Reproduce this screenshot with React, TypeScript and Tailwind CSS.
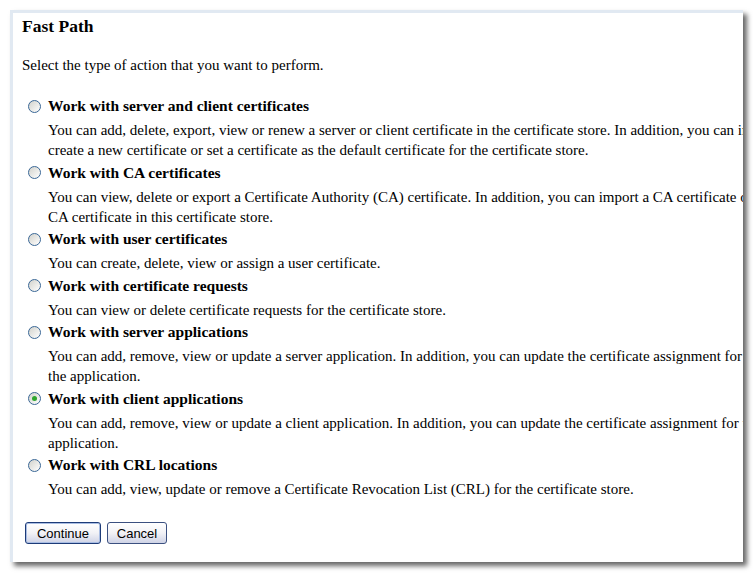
import React from "react";

interface Choice {
  title: string;
  lines: string[];
  checked?: boolean;
}

const choices: Choice[] = [
  {
    title: "Work with server and client certificates",
    lines: [
      "You can add, delete, export, view or renew a server or client certificate in the certificate store. In addition, you can import or",
      "create a new certificate or set a certificate as the default certificate for the certificate store.",
    ],
  },
  {
    title: "Work with CA certificates",
    lines: [
      "You can view, delete or export a Certificate Authority (CA) certificate. In addition, you can import a CA certificate or create a",
      "CA certificate in this certificate store.",
    ],
  },
  {
    title: "Work with user certificates",
    lines: ["You can create, delete, view or assign a user certificate."],
  },
  {
    title: "Work with certificate requests",
    lines: ["You can view or delete certificate requests for the certificate store."],
  },
  {
    title: "Work with server applications",
    lines: [
      "You can add, remove, view or update a server application. In addition, you can update the certificate assignment for",
      "the application.",
    ],
  },
  {
    title: "Work with client applications",
    lines: [
      "You can add, remove, view or update a client application. In addition, you can update the certificate assignment for the client",
      "application.",
    ],
    checked: true,
  },
  {
    title: "Work with CRL locations",
    lines: ["You can add, view, update or remove a Certificate Revocation List (CRL) for the certificate store."],
  },
];

const Radio: React.FC<{ checked?: boolean }> = ({ checked }) => (
  <span className="flex h-[13px] w-[13px] shrink-0 items-center justify-center rounded-full border border-[#3a6796] bg-gradient-to-br from-[#d2d2cc] to-white">
    {checked && <span className="h-[5px] w-[5px] rounded-full bg-[#2fa62f]" />}
  </span>
);

const Button: React.FC<{ label: string; primary?: boolean }> = ({ label, primary }) => (
  <button
    className={
      "h-[22px] rounded-[3px] border bg-gradient-to-b from-white via-[#f2f2f6] to-[#cfd3e6] text-[13px] leading-none text-black " +
      (primary
        ? "w-[76px] border-[#1d3b78] shadow-[inset_0_0_0_1px_#a9bde3]"
        : "w-[60px] border-[#3b5080]")
    }
    style={{ fontFamily: '"Liberation Sans", Arial, sans-serif' }}
  >
    {label}
  </button>
);

export default function App() {
  return (
    <div className="h-[573px] w-[753px] bg-white pl-[10px] pt-[10px]" style={{ fontFamily: '"Liberation Serif", "Times New Roman", serif' }}>
      <div className="h-[552px] w-[733px] overflow-hidden border-l-[3px] border-t-[3px] border-[#e1e9f2] bg-white pl-[9px] pt-[3px] text-black shadow-[4px_4px_5px_rgba(0,0,0,0.6)]">
        <h1 className="text-[17.5px] font-bold leading-[20px]">Fast Path</h1>
        <p className="mt-[19px] text-[15px] leading-[20px]">Select the type of action that you want to perform.</p>
        <div className="mt-[21px] flex flex-col gap-[2.5px]">
          {choices.map((c) => (
            <div key={c.title}>
              <div className="flex items-center">
                <span className="ml-[6px] mr-[7px]">
                  <Radio checked={c.checked} />
                </span>
                <span className="text-[15.5px] font-bold leading-[20px]">{c.title}</span>
              </div>
              <div className="ml-[26px] mt-[4px] text-[15px] leading-[20px]">
                {c.lines.map((l) => (
                  <div key={l} className="whitespace-nowrap">
                    {l}
                  </div>
                ))}
              </div>
            </div>
          ))}
        </div>
        <div className="ml-[3px] mt-[23px] flex gap-[6px]">
          <Button label="Continue" primary />
          <Button label="Cancel" />
        </div>
      </div>
    </div>
  );
}
